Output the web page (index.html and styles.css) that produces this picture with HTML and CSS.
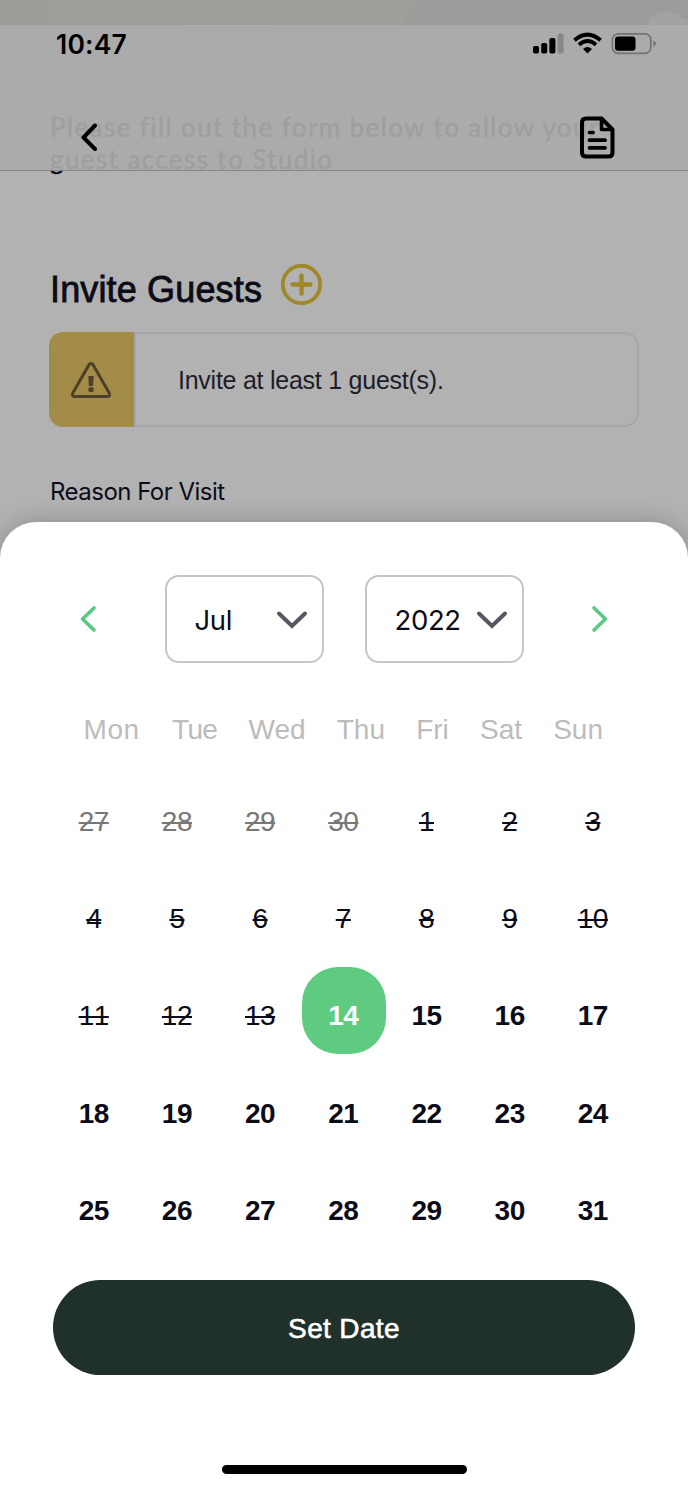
FILE: index.html
```html
<!DOCTYPE html>
<html lang="en">
<head>
<meta charset="utf-8">
<title>Invite Guests</title>
<link rel="stylesheet" href="styles.css">
</head>
<body>
<div class="screen">
  <div class="cover"><svg width="688" height="25" viewBox="0 0 688 25"><path d="M405 25Q405 8 420 0H634Q646 8 646 25Z" fill="#9c9c9b"/><path d="M649 25l1-7 5-2 3-4 5 1 4-2 5 3 6-1 3 5 7 2v5Z" fill="#a3a3a2"/></svg></div>
  <main class="content">
    <p class="intro">Please fill out the form below to allow your<br>guest access to Studio</p>
    <div class="title-row">
      <h1 class="title">Invite Guests</h1>
      <svg class="add" width="42" height="42" viewBox="0 0 42 42" fill="none" stroke="#a08829"><circle cx="20.5" cy="20.5" r="18.7" stroke-width="3.8"/><path d="M20.500 11.500v18M11.500 20.500h18" stroke-width="4.4" stroke-linecap="round"/></svg>
    </div>
    <div class="alert">
      <div class="alert-icon"><svg width="42" height="38" viewBox="0 0 42 38"><path d="M18.7 4.2Q21 .8 23.3 4.2L39.2 32Q40.6 35.5 37 35.5H5Q1.400 35.500 2.800 32Z" fill="none" stroke="#4b4128" stroke-width="3" stroke-linejoin="round"/><path d="M18.300 15h5.400l-.6 10h-4.200Z" fill="#4b4128"/><circle cx="21" cy="28.600" r="2.700" fill="#4b4128"/></svg></div>
      <p class="alert-text">Invite at least 1 guest(s).</p>
    </div>
    <p class="label">Reason For Visit</p>
  </main>
  <header class="topbar">
    <div class="status">
      <span class="time">10:47</span>
      <svg width="124" height="24" viewBox="0 0 124 24"><g><rect x="1" y="14" width="6" height="7.500" rx="1.700"/><rect x="9.200" y="11" width="6" height="10.500" rx="1.700"/><rect x="17.400" y="6" width="6" height="15.500" rx="1.700"/><rect x="25.600" y="1.500" width="6" height="20" rx="1.700" fill="#878787"/></g><g fill="none" stroke="#000"><path d="M42.500 8.200Q55.500-3 68.500 8.200" stroke-width="4"/><path d="M46.900 12.700Q55.500 5.300 64.100 12.700" stroke-width="3.800"/></g><path d="M55.500 21.500L51 17Q55.500 13 60 17Z"/><rect x="80.400" y="1.800" width="38.400" height="19.600" rx="5.800" fill="none" stroke="#747474" stroke-width="1.700"/><rect x="83" y="4.500" width="20.500" height="14.200" rx="3"/><path d="M121.300 8.500Q124 9.500 124 11.600Q124 13.700 121.300 14.700Z" fill="#747474"/></svg>
    </div>
    <div class="nav">
      <svg width="18" height="30" viewBox="0 0 18 30" fill="none" stroke="#000" stroke-width="4" stroke-linecap="round" stroke-linejoin="round"><path d="M16 3.500L4.500 15.500 16 27"/></svg>
      <svg width="36" height="44" viewBox="0 0 36 44" fill="none" stroke="#000" stroke-width="4" stroke-linecap="round" stroke-linejoin="round"><path d="M22.500 3.500H7Q3 3.500 3 7.500V37.500Q3 41.500 7 41.500H29.500Q33.500 41.500 33.500 37.500V14.500Z"/><path d="M22.500 3.500V14.500H33.500" stroke-width="3.600"/><path d="M10.500 17.500h3.600M10.500 25.200h15.600M10.500 32.800h15.600" stroke-width="3.700"/></svg>
    </div>
  </header>
  <section class="sheet">
    <div class="picker">
      <svg width="18" height="28" viewBox="0 0 18 28" class="arrow"><path d="M15 3L3.500 14 15 25"/></svg>
      <div class="selects">
        <div class="select"><span>Jul</span><svg width="32" height="20" viewBox="0 0 32 20" class="caret"><path d="M3 3.500L16 16 29 3.500"/></svg></div>
        <div class="select"><span>2022</span><svg width="32" height="20" viewBox="0 0 32 20" class="caret"><path d="M3 3.500L16 16 29 3.500"/></svg></div>
      </div>
      <svg width="18" height="28" viewBox="0 0 18 28" class="arrow"><path d="M3 3L14.500 14 3 25"/></svg>
    </div>
    <div class="weekdays"><span class="mon">Mon</span><span class="tue">Tue</span><span>Wed</span><span>Thu</span><span>Fri</span><span>Sat</span><span>Sun</span></div>
    <div class="days">
      <span class="day off other">27</span><span class="day off other">28</span><span class="day off other">29</span><span class="day off other">30</span><span class="day off">1</span><span class="day off">2</span><span class="day off">3</span>
      <span class="day off">4</span><span class="day off">5</span><span class="day off">6</span><span class="day off">7</span><span class="day off">8</span><span class="day off">9</span><span class="day off">10</span>
      <span class="day off">11</span><span class="day off">12</span><span class="day off">13</span><span class="day selected">14</span><span class="day">15</span><span class="day">16</span><span class="day">17</span>
      <span class="day">18</span><span class="day">19</span><span class="day">20</span><span class="day">21</span><span class="day">22</span><span class="day">23</span><span class="day">24</span>
      <span class="day">25</span><span class="day">26</span><span class="day">27</span><span class="day">28</span><span class="day">29</span><span class="day">30</span><span class="day">31</span>
    </div>
    <button class="submit">Set Date</button>
    <div class="home"></div>
  </section>
</div>
</body>
</html>
```
FILE: styles.css
```css
* { box-sizing: border-box; }
body { margin: 0; }
p, h1 { margin: 0; }
svg { display: block; flex: none; }
.screen {
  position: relative;
  width: 688px;
  height: 1488px;
  overflow: hidden;
  display: flex;
  flex-direction: column;
  background: #b2b2b2;
  color: #0b0c18;
  font-family: "Liberation Sans", Arial, sans-serif;
}
.cover { height: 25px; background: linear-gradient(90deg, #9d9c99, #9f9e9b 45%, #a09e99 60%, #9c9c9b 66%, #9c9c9b); }
.content { height: 497px; padding: 86px 50px 0; display: flex; flex-direction: column; }
.intro { font: 400 26px/32px Lato, sans-serif; letter-spacing: 1.4px; white-space: nowrap; -webkit-text-stroke: 0.5px #0b0c18; }
.title-row { display: flex; gap: 18.5px; margin-top: 87px; height: 54px; }
.title { font-size: 36px; font-weight: 400; line-height: 56px; letter-spacing: 0.15px; -webkit-text-stroke: 0.8px #0b0c18; width: 212px; white-space: nowrap; }
.add { margin-top: 1.5px; }
.alert {
  display: flex;
  height: 95px;
  margin: 16px -1px 0 -1px;
  border-radius: 14px;
  overflow: hidden;
}
.alert-icon { width: 85px; padding-left: 21px; display: flex; align-items: center; background: #a38b48; }
.alert-text { flex: 1; padding-left: 42px; border: 2px solid #a5a6aa; border-radius: 0 14px 14px 0; font-size: 25px; line-height: 93px; letter-spacing: -0.25px; color: #1c1d29; white-space: nowrap; }
.label { margin-top: 47px; font: 400 24px/36px Inter, sans-serif; letter-spacing: -0.52px; }
.topbar {
  position: absolute;
  top: 25px;
  left: 0;
  width: 100%;
  height: 146px;
  background: rgba(170, 170, 170, 0.93);
  border-bottom: 1px solid #858585;
  color: #000;
}
.status { display: flex; justify-content: space-between; padding: 7px 32px 0 56px; }
.time { font: 600 26.5px/24px Inter, sans-serif; letter-spacing: 0.2px; }
.nav { display: flex; justify-content: space-between; align-items: center; padding: 0 73px 0 79px; margin-top: 59px; }
.sheet {
  position: relative;
  height: 966px;
  background: #fff;
  border-radius: 36px 36px 0 0;
  box-shadow: 0 0 24px rgba(0, 0, 0, 0.22);
  display: flex;
  flex-direction: column;
}
.picker { display: flex; align-items: center; justify-content: space-between; padding: 0 79px; margin-top: 53px; }
.arrow { fill: none; stroke: #5ac97f; stroke-width: 3.6; stroke-linecap: round; stroke-linejoin: round; }
.selects { display: flex; gap: 41px; }
.select {
  width: 159px;
  height: 88px;
  padding: 1px 14px 0 28px;
  border: 2px solid #c6c6c6;
  border-radius: 14px;
  display: flex;
  align-items: center;
  justify-content: space-between;
  font: 400 27.5px/32px Inter, sans-serif;
  letter-spacing: -0.35px;
}
.caret { fill: none; stroke: #55565f; stroke-width: 4; stroke-linecap: round; stroke-linejoin: miter; }
.weekdays { display: flex; justify-content: space-between; margin: 46px 85px 0 84px; font-size: 28px; line-height: 41px; color: #bcbcbc; }
.mon { letter-spacing: 0.6px; margin-left: -0.5px; }
.tue { letter-spacing: -0.6px; margin-left: 1px; }
.days {
  display: grid;
  grid-template-columns: repeat(7, 83.2px);
  grid-auto-rows: 86.5px;
  row-gap: 10.7px;
  justify-content: center;
  margin-top: 23px;
}
.day { padding: 11px 1.4px 0 0; border-radius: 36px; text-align: center; font-size: 28px; line-height: 75px; letter-spacing: -0.5px; font-weight: 700; font-kerning: none; }
.off { font-weight: 400; text-decoration: line-through; text-decoration-thickness: 2px; }
.other { color: #777; }
.selected { color: #fff; background: #5ecb80; }
.submit {
  width: 582px;
  height: 95px;
  margin: 32px auto 0;
  padding: 3px 0 0;
  border: 0;
  border-radius: 48px;
  background: #20302b;
  color: #fff;
  font: 400 28px/34px "Liberation Sans", Arial, sans-serif;
  letter-spacing: 0.35px;
  -webkit-text-stroke: 0.6px #fff;
}
.home { width: 245px; height: 9px; margin: 90px auto 0; border-radius: 5px; background: #000; }
```
